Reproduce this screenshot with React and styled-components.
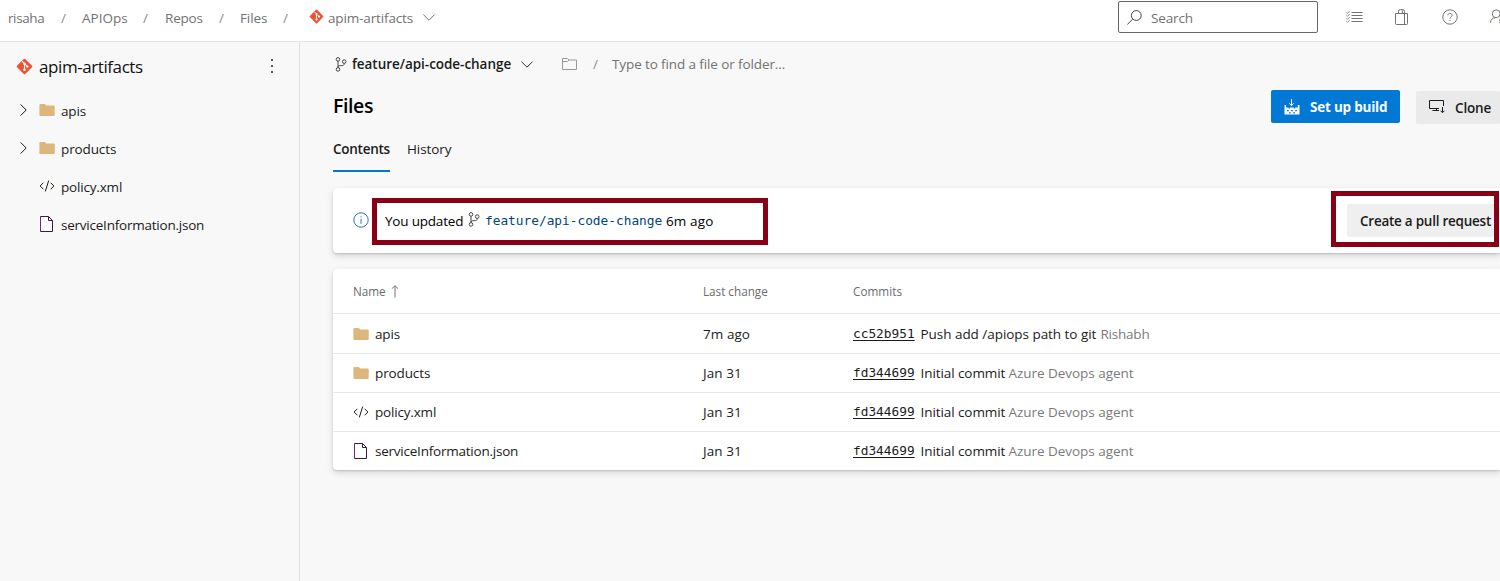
import React from "react";
import styled, { createGlobalStyle } from "styled-components";

const GlobalStyle = createGlobalStyle`
  * { box-sizing: border-box; }
  html, body { margin: 0; padding: 0; overflow: hidden; }
  body {
    background: #f8f8f8;
    color: #1b1b1b;
    font-family: "Open Sans", "Noto Sans", sans-serif;
    font-size: 13.5px;
    line-height: 20px;
  }
`;

const Text = styled.span`
  flex: none;
  display: block;
  white-space: nowrap;
  width: ${(p) => (p.$w ? `${p.$w}px` : "auto")};
  padding-top: ${(p) => p.$pt || 0}px;
  letter-spacing: ${(p) => p.$ls || 0}px;
  font-size: ${(p) => p.$size || 13.5}px;
  font-weight: ${(p) => p.$weight || 400};
  color: ${(p) => p.$color || "inherit"};
`;

const Icon = styled.svg`
  flex: none;
  display: block;
  fill: none;
  stroke: currentColor;
  stroke-width: 1;
  overflow: visible;
`;

/* ---------- icons ---------- */

const GitIcon = ({ size }) => (
  <Icon width={size} height={size} viewBox="0 0 16 16" stroke="none">
    <rect x="2.55" y="2.55" width="10.9" height="10.9" rx="0.9" fill="#f05133" stroke="none" transform="rotate(45 8 8)" />
    <path d="M5.6 2.9 8 5.3V11M8.2 5.6l2.5 2.5" stroke="#fff" strokeWidth="1" />
    <circle cx="8" cy="5.4" r="1.15" fill="#fff" stroke="none" />
    <circle cx="8" cy="11.1" r="1.15" fill="#fff" stroke="none" />
    <circle cx="10.7" cy="8.1" r="1.15" fill="#fff" stroke="none" />
  </Icon>
);

const ChevronDown = () => (
  <Icon width="12" height="7" viewBox="0 0 12 7">
    <path d="M0.4 0.6 6 6.2 11.6 0.6" />
  </Icon>
);

const ChevronRight = () => (
  <Icon width="7" height="12" viewBox="0 0 7 12">
    <path d="M0.6 0.4 6.2 6 0.6 11.6" />
  </Icon>
);

const BranchIcon = () => (
  <Icon width="12" height="15" viewBox="0 0 12 15">
    <circle cx="3" cy="2.4" r="1.8" />
    <circle cx="3" cy="12.4" r="1.8" />
    <circle cx="9.2" cy="4.6" r="1.8" />
    <path d="M3 4.2v6.4M9.2 6.4c0 2-1.2 2.3-3 2.3H4.6C3.6 8.7 3 9.4 3 10.4" />
  </Icon>
);

const FolderFilled = () => (
  <Icon width="16" height="16" viewBox="0 0 16 16">
    <path d="M.4 3.3Q.4 2 1.5 2H5.8L7.3 3.5H14.6Q15.7 3.5 15.7 4.6V12.9Q15.7 13.9 14.6 13.9H1.5Q.4 13.9 .4 12.9Z" fill="#dcb67a" stroke="none" />
  </Icon>
);

const FolderOutline = () => (
  <Icon width="15" height="12" viewBox="0 0 15 12">
    <path d="M.5 .5H5.5L7 2H14.5V11.5H.5ZM.5 3.5H5.5L7 2" />
  </Icon>
);

const CodeIcon = () => (
  <Icon width="16" height="16" viewBox="0 0 16 16">
    <path d="M4.3 4.8 1.1 8 4.3 11.2M11.7 4.8 14.9 8 11.7 11.2M9.7 2.6 6.3 13.4" />
  </Icon>
);

const FileIcon = () => (
  <Icon width="16" height="16" viewBox="0 0 16 16">
    <path d="M1.5 .5H9.5L13.5 4.5V15.5H1.5Z" fill="#fff" stroke="#3a1a3f" />
    <path d="M9.5 .5V4.5H13.5" stroke="#3a1a3f" />
    <path d="M1.5 1V15" stroke="#7d1e86" />
  </Icon>
);

const SearchIcon = () => (
  <Icon width="15" height="15" viewBox="0 0 15 15">
    <circle cx="9.3" cy="5.5" r="4.9" />
    <path d="M5.8 9 .4 14.4" />
  </Icon>
);

const ListIcon = () => (
  <Icon width="17" height="12" viewBox="0 0 17 12">
    <path d="M5.5 1.5H16.5M5.5 4.500H16.5M5.5 7.5H16.5M5.5 10.5H16.5" />
    <path d="M.4 1.3 1.5 2.3 3.700 .1M.4 4.3 1.5 5.3 3.7 3.1M.4 7.3 1.5 8.3 3.7 6.1M.4 10.3 1.5 11.3 3.7 9.1" strokeWidth=".8" />
  </Icon>
);

const BagIcon = () => (
  <Icon width="13" height="16" viewBox="0 0 13 16">
    <path d="M.5 4.500H12.5V14.5Q12.5 15.500 11.5 15.5H1.5Q.5 15.5 .5 14.500ZM3.500 4.5V2.5Q3.5 .5 5.500 .5H7.5Q9.5 .5 9.5 2.500V15.500M6.5 .6Q7.5 1 7.500 4.500" />
  </Icon>
);

const HelpIcon = () => (
  <Icon width="16" height="16" viewBox="0 0 16 16">
    <circle cx="8" cy="8" r="7.2" />
    <path d="M5.9 6.3C5.9 3.7 10.1 3.7 10.1 6.2 10.1 7.8 8 7.9 8 9.7M8 11V12.1" />
  </Icon>
);

const PersonIcon = () => (
  <Icon width="16" height="16" viewBox="0 0 16 16">
    <circle cx="6.2" cy="4.8" r="3.9" />
    <path d="M.5 13.700C.7 10.7 2.6 8.8 5.4 8.7" />
    <path d="M9.5 10.500v1.500M9.5 13v1" stroke="#a08a70" />
  </Icon>
);

const InfoIcon = () => (
  <Icon width="16" height="16" viewBox="0 0 16 16">
    <circle cx="8" cy="8" r="7.2" />
    <path d="M8 6.8V11.8M8 4.3V5.4" />
  </Icon>
);

const BuildIcon = () => (
  <Icon width="16" height="16" viewBox="0 0 16 16">
    <path d="M7.5 .2V6.600M5.200 4.300 7.5 6.600 9.800 4.300" />
    <path d="M.5 6H2V8.500H13.800V6H15.500V15.500H.5Z" fill="currentColor" stroke="none" />
    <path d="M4.500 8h1.500v1.500h-1.500zM9.700 8h1.500v1.500h-1.500zM3 11h1.700v1.300H3zM7.100 11h1.700v1.300H7.100zM11.200 11h1.700v1.300h-1.700zM5 13.200h1.700v1.200H5zM9.200 13.200h1.700v1.200H9.200z" fill="#0078d4" stroke="none" />
  </Icon>
);

const CloneIcon = () => (
  <Icon width="17" height="14" viewBox="0 0 17 14">
    <path d="M10 8.500H.5V.5H14.500V6M7.500 8.500V10.500M3.500 10.500H10M13.500 7V12.500M11.500 10.700 13.500 12.700 15.500 10.700" />
  </Icon>
);

const SortArrow = () => (
  <Icon width="8" height="13" viewBox="0 0 8 13">
    <path d="M4 12.500V.8M.9 3.700 4 .7 7.100 3.700" />
  </Icon>
);

const KebabIcon = () => (
  <Icon width="2" height="14" viewBox="0 0 2 14">
    <path d="M0 0h2v2H0zM0 6h2v2H0zM0 12h2v2H0z" fill="currentColor" stroke="none" />
  </Icon>
);

/* ---------- layout ---------- */

const Page = styled.div`
  display: flex;
  flex-direction: column;
  width: 1500px;
  height: 581px;
  overflow: hidden;
`;

const Header = styled.header`
  flex: none;
  display: flex;
  height: 42px;
  background: #fff;
  border-bottom: 1px solid #e4e4e4;
  color: #727272;
`;

const Breadcrumb = styled.nav`
  flex: 1;
  display: flex;
  align-items: center;
  height: 35px;
  padding-left: 8px;
`;

const Slash = styled.span`
  flex: none;
  width: ${(p) => p.$w}px;
  padding-left: ${(p) => p.$pl}px;
  color: #8d8d8d;
`;

const Crumb = styled.div`
  display: flex;
  align-items: center;
`;

const IconSlot = styled.span`
  flex: none;
  display: flex;
  align-items: center;
  width: ${(p) => p.$w}px;
  padding-top: ${(p) => p.$pt || 0}px;
  padding-bottom: ${(p) => p.$pb || 0}px;
  padding-left: ${(p) => p.$pl || 0}px;
  color: ${(p) => p.$color || "inherit"};
`;

const SearchBox = styled.div`
  flex: none;
  display: flex;
  align-items: center;
  width: 200px;
  height: 32px;
  margin-top: 1px;
  padding-left: 8px;
  border: 1px solid #666;
  border-radius: 2px;
`;

const HeaderActions = styled.div`
  flex: none;
  display: flex;
  align-items: center;
  width: 182px;
  height: 34px;
  padding-left: 28px;
  overflow: hidden;
`;

const Body = styled.div`
  flex: 1;
  display: flex;
  min-height: 0;
`;

const Sidebar = styled.aside`
  flex: none;
  width: 300px;
  border-right: 1px solid #e0e0e0;
`;

const RepoTitle = styled.div`
  display: flex;
  align-items: center;
  height: 50px;
  padding-left: 16px;
  color: #111;
`;

const TreeRow = styled.div`
  display: flex;
  align-items: center;
  height: 38px;
  padding-left: 20px;
`;

const Main = styled.main`
  flex: 1;
  min-width: 0;
  display: flex;
  flex-direction: column;
  padding-left: 33px;
`;

const BranchBar = styled.div`
  display: flex;
  align-items: center;
  height: 44px;
`;

const TitleRow = styled.div`
  display: flex;
  height: 47px;
`;

const Title = styled.h1`
  flex: 1;
  margin: 0;
  padding-top: 6px;
  font-size: 19.5px;
  font-weight: 600;
  line-height: 28px;
  letter-spacing: -0.4px;
  color: #000;
`;

const Button = styled.button`
  flex: none;
  display: flex;
  align-items: center;
  width: ${(p) => p.$w}px;
  height: 33px;
  margin: ${(p) => p.$mt || 0}px 0 0 ${(p) => p.$ml || 0}px;
  padding: 0 0 0 13px;
  border: 0;
  border-radius: 2px;
  font: inherit;
  line-height: 20px;
  background: ${(p) => (p.$primary ? "#0078d4" : p.$bg || "#eaeaea")};
  color: ${(p) => (p.$primary ? "#fff" : "#1b1b1b")};
`;

const Tabs = styled.div`
  display: flex;
  gap: 17px;
  height: 39px;
`;

const Tab = styled.div`
  height: 39px;
  padding-top: 6px;
  border-bottom: 2px solid ${(p) => (p.$active ? "#0078d4" : "transparent")};
`;

const Card = styled.section`
  flex: none;
  background: #fff;
  border-radius: 4px 0 0 4px;
  box-shadow: 0 3px 7px rgba(0, 0, 0, 0.14), 0 1px 2px rgba(0, 0, 0, 0.14);
`;

const Notice = styled(Card)`
  display: flex;
  justify-content: space-between;
  height: 65px;
  margin-top: 16px;
  padding-left: 20px;
`;

const NoticeMessage = styled.div`
  display: flex;
`;

const Callout = styled.div`
  display: flex;
  align-items: center;
  width: ${(p) => p.$w}px;
  height: ${(p) => p.$h}px;
  margin-top: ${(p) => p.$mt}px;
  margin-right: ${(p) => p.$mr || 0}px;
  padding-left: ${(p) => p.$pl}px;
  padding-bottom: ${(p) => p.$pb || 0}px;
  border: 5px solid #880015;
  color: #000;
`;

const Mono = styled.span`
  flex: none;
  display: block;
  width: ${(p) => p.$w}px;
  font-family: "DejaVu Sans Mono", monospace;
  font-size: 12.8px;
  line-height: 20px;
  white-space: nowrap;
  color: ${(p) => p.$color || "inherit"};
  text-decoration: ${(p) => (p.$underline ? "underline" : "none")};
  text-underline-offset: 2px;
`;

const FileTable = styled(Card)`
  height: 201px;
  margin-top: 16px;
`;

const Row = styled.div`
  display: grid;
  grid-template-columns: 350px 150px 1fr;
  align-items: center;
  height: ${(p) => p.$h}px;
  padding-left: 20px;
  border-bottom: 1px solid ${(p) => (p.$last ? "transparent" : "#e8e8e8")};
`;

const Cell = styled.div`
  display: flex;
  align-items: center;
`;

const ICONS = { folder: FolderFilled, code: CodeIcon, file: FileIcon };

const TREE = [
  { icon: "folder", name: "apis", open: true, ls: -0.15 },
  { icon: "folder", name: "products", open: true, ls: -0.12 },
  { icon: "code", name: "policy.xml", ls: -0.18 },
  { icon: "file", name: "serviceInformation.json", ls: -0.23 },
];

const INITIAL = { hash: "fd344699", msg: "Initial commit", msgW: 88, msgLs: -0.08, author: "Azure Devops agent", authorLs: -0.04 };
const COMMITS = [
  { hash: "cc52b951", msg: "Push add /apiops path to git", msgW: 180, msgLs: -0.04, author: "Rishabh", authorLs: -0.22 },
  INITIAL,
  INITIAL,
  INITIAL,
];

export default function App() {
  return (
    <>
      <GlobalStyle />
      <Page>
        <Header>
          <Breadcrumb>
            <Text $w={37} $ls={-0.4}>risaha</Text>
            <Slash $w={37} $pl={16}>/</Slash>
            <Text $w={46} $ls={0.02}>APIOps</Text>
            <Slash $w={37} $pl={15}>/</Slash>
            <Text $w={38} $ls={-0.2}>Repos</Text>
            <Slash $w={37} $pl={16}>/</Slash>
            <Text $w={28} $ls={-0.1}>Files</Text>
            <Slash $w={41} $pl={15}>/</Slash>
            <Crumb>
              <IconSlot $w={19} $pb={2}><GitIcon size={15} /></IconSlot>
              <Text $w={95} $ls={-0.14}>apim-artifacts</Text>
              <IconSlot $w={12}><ChevronDown /></IconSlot>
            </Crumb>
          </Breadcrumb>
          <SearchBox>
            <IconSlot $w={24} $color="#444"><SearchIcon /></IconSlot>
            <Text $ls={-0.13} $pt={2}>Search</Text>
          </SearchBox>
          <HeaderActions>
            <IconSlot $w={49} $pb={1}><ListIcon /></IconSlot>
            <IconSlot $w={47}><BagIcon /></IconSlot>
            <IconSlot $w={48} $pb={1}><HelpIcon /></IconSlot>
            <IconSlot $w={16}><PersonIcon /></IconSlot>
          </HeaderActions>
        </Header>
        <Body>
          <Sidebar>
            <RepoTitle>
              <IconSlot $w={23} $pb={2}><GitIcon size={17} /></IconSlot>
              <Text $w={232} $size={17} $ls={-0.42}>apim-artifacts</Text>
              <IconSlot $w={2} $pb={2} $color="#555"><KebabIcon /></IconSlot>
            </RepoTitle>
            {TREE.map((f) => {
              const FileGlyph = ICONS[f.icon];
              return (
                <TreeRow key={f.name}>
                  <IconSlot $w={19} $pb={2}>{f.open && <ChevronRight />}</IconSlot>
                  <IconSlot $w={22} $pb={2}><FileGlyph /></IconSlot>
                  <Text $ls={f.ls}>{f.name}</Text>
                </TreeRow>
              );
            })}
          </Sidebar>
          <Main>
            <BranchBar>
              <IconSlot $w={19} $pl={2} $color="#444"><BranchIcon /></IconSlot>
              <Text $w={169} $weight={600} $ls={-0.04}>feature/api-code-change</Text>
              <IconSlot $w={41} $color="#333"><ChevronDown /></IconSlot>
              <IconSlot $w={31} $color="#999"><FolderOutline /></IconSlot>
              <Slash $w={19} $pl={0}>/</Slash>
              <Text $ls={-0.11} $color="#727272">Type to find a file or folder...</Text>
            </BranchBar>
            <TitleRow>
              <Title>Files</Title>
              <Button $primary $w={129} $mt={4}>
                <IconSlot $w={26}><BuildIcon /></IconSlot>
                <Text $weight={700} $ls={-0.22}>Set up build</Text>
              </Button>
              <Button $w={84} $mt={5} $ml={16}>
                <IconSlot $w={26} $pb={1}><CloneIcon /></IconSlot>
                <Text $weight={600} $ls={-0.15} $pt={1}>Clone</Text>
              </Button>
            </TitleRow>
            <Tabs>
              <Tab $active><Text $w={57} $weight={600} $ls={-0.26}>Contents</Text></Tab>
              <Tab><Text $ls={-0.1}>History</Text></Tab>
            </Tabs>
            <Notice>
              <NoticeMessage>
                <IconSlot $w={19} $pb={1} $color="#2f6fc7"><InfoIcon /></IconSlot>
                <Callout $w={396} $h={47} $mt={10} $pl={8} $pb={1}>
                  <Text $w={83} $ls={-0.2}>You updated</Text>
                  <IconSlot $w={17} $pb={4} $color="#444"><BranchIcon /></IconSlot>
                  <Mono $w={181} $color="#004578">feature/api-code-change</Mono>
                  <Text $ls={0.12}>6m ago</Text>
                </Callout>
              </NoticeMessage>
              <Callout $w={168} $h={56} $mt={3} $pl={11} $mr={1}>
                <Button $w={147} $bg="#efefef" $mt={2}>
                  <Text $weight={600} $ls={-0.25} $pt={2}>Create a pull request</Text>
                </Button>
              </Callout>
            </Notice>
            <FileTable>
              <Row $h={45}>
                <Cell>
                  <Text $w={38} $size={11.7} $weight={500} $color="#6b6b6b">Name</Text>
                  <IconSlot $w={8} $color="#777"><SortArrow /></IconSlot>
                </Cell>
                <Text $size={11.7} $weight={500} $color="#6b6b6b">Last change</Text>
                <Text $size={11.7} $weight={500} $ls={0.05} $color="#6b6b6b">Commits</Text>
              </Row>
              {TREE.map((f, i) => {
                const FileGlyph = ICONS[f.icon];
                const c = COMMITS[i];
                return (
                  <Row key={f.name} $h={i === 0 ? 40 : 39} $last={i === 3}>
                    <Cell>
                      <IconSlot $w={22}><FileGlyph /></IconSlot>
                      <Text $ls={f.ls}>{f.name}</Text>
                    </Cell>
                    <Text $ls={0.06}>{i === 0 ? "7m ago" : "Jan 31"}</Text>
                    <Cell>
                      <Mono $w={67.5} $underline>{c.hash}</Mono>
                      <Text $w={c.msgW} $ls={c.msgLs}>{c.msg}</Text>
                      <Text $ls={c.authorLs} $color="#7a7a7a">{c.author}</Text>
                    </Cell>
                  </Row>
                );
              })}
            </FileTable>
          </Main>
        </Body>
      </Page>
    </>
  );
}
